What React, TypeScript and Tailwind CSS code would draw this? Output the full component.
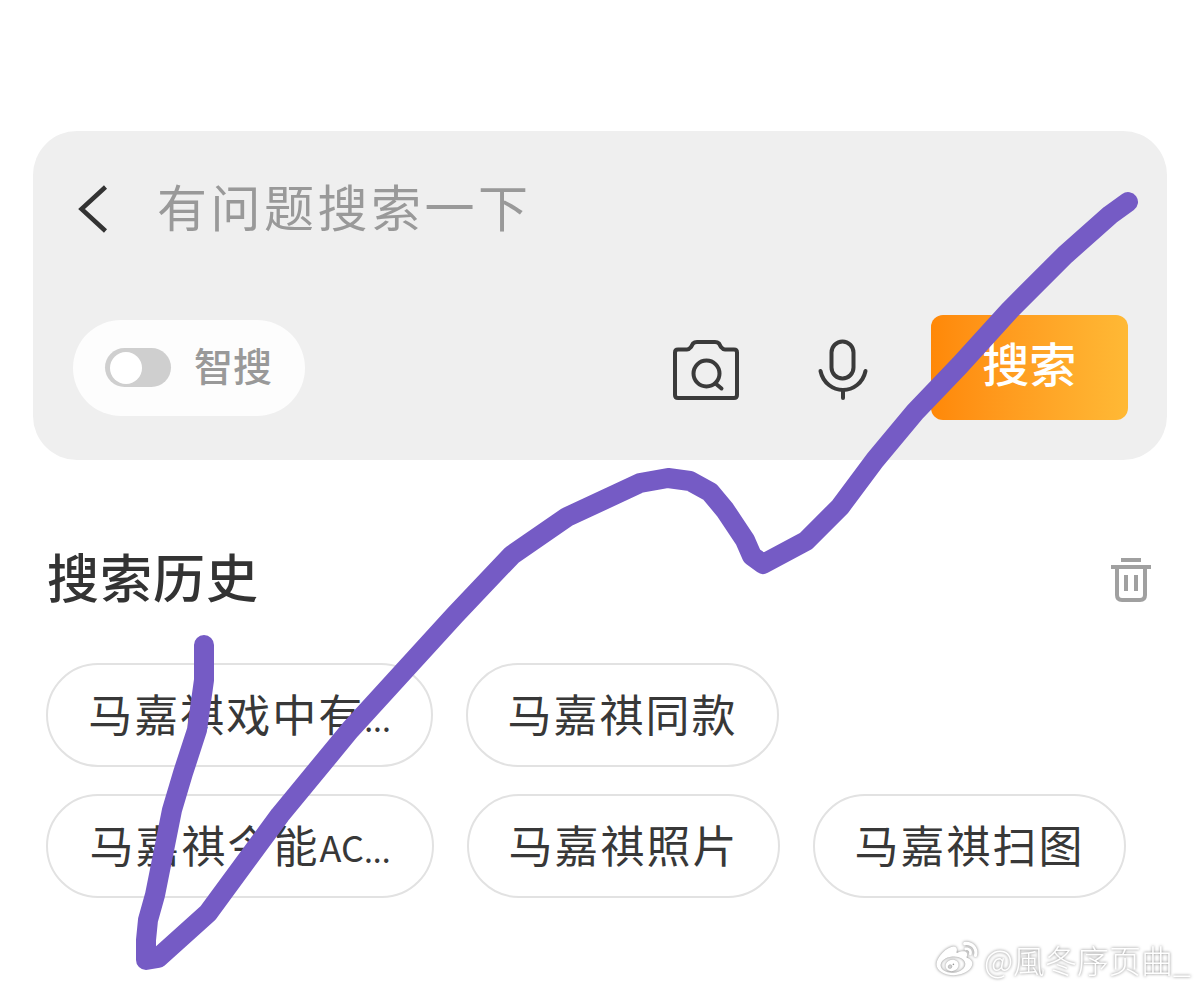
import { SiSinaweibo } from "react-icons/si";
import type { ReactNode } from "react";

const cjk = "font-['Noto_Sans_CJK_SC','Noto_Sans',sans-serif]";

function Chip({ children, width }: { children: ReactNode; width: string }) {
  return (
    <div className={`${width} h-[104px] shrink-0 flex items-center justify-center rounded-full border-[2px] border-[#e2e2e2] text-[#383838] text-[44px] tracking-[2px] leading-none whitespace-nowrap pb-[5px]`}>
      {children}
    </div>
  );
}

function Dots() {
  return <span className="text-[32px] tracking-[0px] pt-[10px]">...</span>;
}

const stroke =
  "M204 645 L204 680 L197 730 L183 773 L172 810 L161 865 L155 895 L148 920 L146 940 L146 960 L158 958 L208 913 L280 815 L350 730 L455 615 L512 555 L567 517 L640 483 L668 478 L690 481 L710 492 L725 510 L745 540 L752 556 L763 564 L806 541 L840 507 L875 460 L915 412 L960 365 L1010 310 L1065 255 L1110 215 L1128 202";

export default function App() {
  return (
    <div className={`${cjk} relative w-[1200px] h-[990px] overflow-hidden bg-white pt-[131px]`}>
      <div className="mx-[33px] h-[329px] rounded-[44px] bg-[#efefef] pt-[54px] pl-[40px] pr-[39px]">
        <div className="flex items-center h-[48px] pl-[5px]">
          <svg width="30" height="48" viewBox="0 0 30 48" fill="none" className="shrink-0">
            <path d="M27.5 2 L3.5 24 L27.5 46" stroke="#333333" strokeWidth="4.5" />
          </svg>
          <span className="ml-[49px] pb-[8px] text-[50px] tracking-[3.5px] leading-none text-[#999999] font-normal whitespace-nowrap">有问题搜索一下</span>
        </div>
        <div className="mt-[82px] flex items-center">
          <div className="w-[232px] h-[96px] rounded-full bg-[#fdfdfd] flex items-center pl-[32px]">
            <div className="w-[66px] h-[39px] rounded-full bg-[#cfcfcf] flex items-center pl-[5px]">
              <div className="w-[32px] h-[32px] rounded-full bg-white" />
            </div>
            <span className="ml-[23px] pb-[7px] text-[39px] leading-none text-[#999999] font-medium whitespace-nowrap">智搜</span>
          </div>
          <svg width="66" height="60" viewBox="0 0 66 60" fill="none" className="ml-[368px] mt-[4px] shrink-0" stroke="#3a3a3a" strokeWidth="4">
            <path d="M5 9.5 H14 Q16 9.5 18 7 L20 3.5 Q21.5 2 24 2 H42 Q44.5 2 46 3.5 L48 7 Q50 9.5 52 9.5 H61 Q64 9.5 64 12.5 V55 Q64 58 61 58 H5 Q2 58 2 55 V12.5 Q2 9.5 5 9.5 Z" />
            <circle cx="33.5" cy="33.5" r="13" />
            <path d="M42.5 43.5 L48.5 48.5" strokeLinecap="round" />
          </svg>
          <svg width="50" height="62" viewBox="0 0 50 62" fill="none" className="ml-[79px] mt-[4px] shrink-0" stroke="#3a3a3a" strokeWidth="4" strokeLinecap="round">
            <rect x="13.5" y="2.5" width="22" height="37" rx="11" />
            <path d="M2.5 32 C5 44 15 51 25 51 C35 51 45 44 47.5 32" />
            <path d="M25 51 V59" />
          </svg>
          <div className="ml-[63px] w-[198px] h-[105px] rounded-[12px] bg-gradient-to-r from-[#ff8807] to-[#ffb935] flex items-center justify-center text-white text-[47px] font-medium leading-none whitespace-nowrap pb-[12px]">
            搜索
          </div>
        </div>
      </div>

      <div className="mt-[90px] pl-[47px] pr-[48px] flex items-center justify-between h-[56px]">
        <span className="pb-[4px] text-[52px] tracking-[1px] leading-none text-[#333333] font-medium whitespace-nowrap">搜索历史</span>
        <svg width="42" height="44" viewBox="0 0 42 44" fill="none" className="mt-[4px] shrink-0" stroke="#a0a0a0" strokeWidth="4">
          <path d="M11 2 H31" strokeWidth="4" />
          <path d="M1 9 H41" />
          <path d="M7 9 V37 Q7 42 12 42 H30 Q35 42 35 37 V9" />
          <path d="M16 17 V33 M26 17 V33" />
        </svg>
      </div>

      <div className="mt-[57px] ml-[46px] flex flex-col gap-[27px]">
        <div className="flex gap-[33px]">
          <Chip width="w-[387px]">马嘉祺戏中有<Dots /></Chip>
          <Chip width="w-[313px]">马嘉祺同款</Chip>
        </div>
        <div className="flex gap-[33px]">
          <Chip width="w-[388px]">马嘉祺今能<span className="text-[36px] tracking-[0px] pt-[4px]">AC</span><Dots /></Chip>
          <Chip width="w-[313px]">马嘉祺照片</Chip>
          <Chip width="w-[313px]">马嘉祺扫图</Chip>
        </div>
      </div>

      <svg width="1200" height="990" viewBox="0 0 1200 990" fill="none" className="absolute inset-0 pointer-events-none">
        <path d={stroke} stroke="#755bc5" strokeWidth="20" strokeLinecap="round" strokeLinejoin="round" />
      </svg>

      <div className="absolute left-[933px] top-[938px] flex items-center gap-[3px] text-white [filter:drop-shadow(0_0_1.5px_rgba(0,0,0,0.5))]">
        <SiSinaweibo className="w-[48px] h-[41px]" />
        <span className="text-[32px] leading-none font-light whitespace-nowrap">@風冬序页曲_</span>
      </div>
    </div>
  );
}
